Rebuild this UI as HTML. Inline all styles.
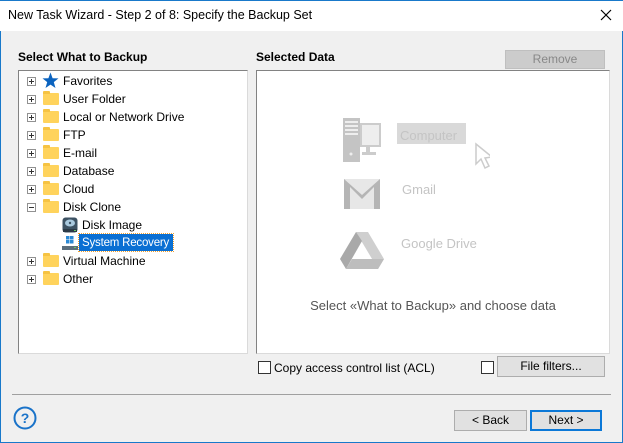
<!DOCTYPE html>
<html><head><style>
body{margin:0;width:623px;height:443px;overflow:hidden;font-family:"Liberation Sans",sans-serif;font-size:12px;color:#000}
.win{position:absolute;left:0;top:0;width:621px;height:442px;border:1px solid #1979ca;border-top:none;background:#f0f0f0}
.title{position:absolute;left:0;top:0;width:623px;height:31px;background:#fff;border-top:1px solid #1979ca;box-sizing:border-box}
.a{position:absolute;white-space:nowrap}
.t{margin-top:1px}
.box{position:absolute;background:#fff;border:1px solid #dadada;border-top-color:#828282;border-left-color:#828282}
.exp{position:absolute;width:7px;height:7px;border:1px solid #919191;background:#fff}
.exp:before{content:"";position:absolute;left:1px;top:3px;width:5px;height:1px;background:#333}
.exp.p:after{content:"";position:absolute;left:3px;top:1px;width:1px;height:5px;background:#333}
.fold{position:absolute;width:16px;height:12px;background:#ffd35c;border-radius:1px}
.fold:before{content:"";position:absolute;left:0;top:-2px;width:7px;height:3px;background:#f6c343;border-radius:1px 1px 0 0}
.btn{position:absolute;background:#e1e1e1;border:1px solid #adadad;text-align:center;box-sizing:border-box}
.cb{position:absolute;width:13px;height:13px;border:1px solid #333;background:#fff;box-sizing:border-box}
</style></head><body>
<div class="win"></div>
<div class="title">
<div class="a" style="left:8px;top:7px;font-size:12.5px">New Task Wizard - Step 2 of 8: Specify the Backup Set</div>
<svg class="a" style="left:600px;top:8px" width="12" height="12"><path d="M1 1L11 11M11 1L1 11" stroke="#000" stroke-width="1.2"/></svg>
</div>
<div class="a" style="left:18px;top:50px;font-weight:bold">Select What to Backup</div>
<div class="a" style="left:256px;top:50px;font-weight:bold">Selected Data</div>
<div class="btn" style="left:505px;top:50px;width:100px;height:19px;background:#ccc;border-color:#bfbfbf;color:#888;line-height:17px">Remove</div>

<div class="box" style="left:18px;top:70px;width:228px;height:282px"></div>
<div class="box" style="left:256px;top:70px;width:352px;height:282px"></div>

<svg class="a" style="left:42px;top:72px" width="17" height="17"><path d="M8.5 0.5L10.6 6.2L16.5 6.4L11.8 10.1L13.5 16L8.5 12.6L3.5 16L5.2 10.1L0.5 6.4L6.4 6.2Z" fill="#0b63bf"/></svg>
<div class="exp p" style="left:27px;top:77px"></div><div class="a t" style="left:63px;top:73px">Favorites</div>
<div class="exp p" style="left:27px;top:95px"></div><div class="fold" style="left:43px;top:93px"></div><div class="a t" style="left:63px;top:91px">User Folder</div>
<div class="exp p" style="left:27px;top:113px"></div><div class="fold" style="left:43px;top:111px"></div><div class="a t" style="left:63px;top:109px">Local or Network Drive</div>
<div class="exp p" style="left:27px;top:131px"></div><div class="fold" style="left:43px;top:129px"></div><div class="a t" style="left:63px;top:127px">FTP</div>
<div class="exp p" style="left:27px;top:149px"></div><div class="fold" style="left:43px;top:147px"></div><div class="a t" style="left:63px;top:145px">E-mail</div>
<div class="exp p" style="left:27px;top:167px"></div><div class="fold" style="left:43px;top:165px"></div><div class="a t" style="left:63px;top:163px">Database</div>
<div class="exp p" style="left:27px;top:185px"></div><div class="fold" style="left:43px;top:183px"></div><div class="a t" style="left:63px;top:181px">Cloud</div>
<div class="exp" style="left:27px;top:203px"></div><div class="fold" style="left:43px;top:201px"></div><div class="a t" style="left:63px;top:199px">Disk Clone</div>
<svg class="a" style="left:62px;top:217px" width="16" height="16"><rect x="0.5" y="0.5" width="15" height="15" rx="3" fill="#3d5263"/><ellipse cx="8" cy="6" rx="5" ry="3.5" fill="#a9c9de"/><circle cx="8" cy="6" r="1.2" fill="#3d5263"/><rect x="1" y="12" width="14" height="3" fill="#2b3a46"/><rect x="12" y="13" width="2" height="1" fill="#6c6"/></svg>
<div class="a t" style="left:82px;top:217px">Disk Image</div>
<svg class="a" style="left:62px;top:235px" width="16" height="16"><rect x="4" y="1" width="3.5" height="3.5" fill="#2b8ad6"/><rect x="8" y="1" width="3.5" height="3.5" fill="#2b8ad6"/><rect x="4" y="5" width="3.5" height="3.5" fill="#2b8ad6"/><rect x="8" y="5" width="3.5" height="3.5" fill="#2b8ad6"/><rect x="0" y="11" width="16" height="4" fill="#5b6e7c"/><rect x="12" y="12" width="2" height="1" fill="#6c6"/></svg>
<div class="a" style="left:79px;top:234px;width:94px;height:17px;background:#0a6fd3;outline:1px dotted #f0a030;color:#fff;line-height:18px;padding-left:3px;box-sizing:border-box;font-size:11.5px;letter-spacing:-0.2px;overflow:hidden">System Recovery</div>
<div class="exp p" style="left:27px;top:257px"></div><div class="fold" style="left:43px;top:255px"></div><div class="a t" style="left:63px;top:253px">Virtual Machine</div>
<div class="exp p" style="left:27px;top:275px"></div><div class="fold" style="left:43px;top:273px"></div><div class="a t" style="left:63px;top:271px">Other</div>

<svg class="a" style="left:340px;top:115px" width="150" height="160">
<rect x="3" y="3" width="17" height="44" fill="#c4c4c4"/><rect x="5" y="6" width="13" height="2" fill="#eee"/><rect x="5" y="10" width="13" height="2" fill="#eee"/><rect x="5" y="14" width="13" height="2" fill="#eee"/><rect x="5" y="18" width="13" height="2" fill="#eee"/><circle cx="11" cy="39" r="1.5" fill="#eee"/>
<rect x="21" y="9" width="19" height="22" fill="#eee" stroke="#ccc" stroke-width="2"/><rect x="26" y="32" width="4" height="5" fill="#ccc"/><rect x="22" y="37" width="14" height="3" fill="#ccc"/>
<rect x="57" y="8" width="69" height="21" fill="#d9d9d9"/>
<path d="M136 29L136 49L141 44L145 53L149 51L145 43L152 42Z" fill="#fff" stroke="#ccc" stroke-width="1.5"/>
<rect x="4" y="64" width="36" height="30" fill="#e7e7e7"/><path d="M4 64V94H10V72L22 84L34 72V94H40V64L22 80Z" fill="#b5b5b5"/>
<path d="M16 117L28 117L44 144L38 154Z" fill="#cfcfcf"/><path d="M16 117L0 144L6 154L22 126Z" fill="#a9a9a9"/><path d="M6 154L38 154L44 144L12 144Z" fill="#bdbdbd"/>
</svg>
<div class="a" style="left:400px;top:128px;color:#c4c4c4;font-size:13px">Computer</div>
<div class="a" style="left:402px;top:182px;color:#c4c4c4;font-size:13px">Gmail</div>
<div class="a" style="left:401px;top:236px;color:#c4c4c4;font-size:13px">Google Drive</div>
<div class="a" style="left:256px;top:298px;width:354px;text-align:center;color:#555;font-size:13px">Select «What to Backup» and choose data</div>

<div class="cb" style="left:258px;top:361px"></div><div class="a" style="left:274px;top:361px">Copy access control list (ACL)</div>
<div class="cb" style="left:481px;top:361px"></div>
<div class="btn" style="left:497px;top:356px;width:108px;height:21px;line-height:19px">File filters...</div>

<div class="a" style="left:12px;top:394px;width:599px;height:1px;background:#a0a0a0"></div>
<svg class="a" style="left:13px;top:406px" width="24" height="24"><circle cx="12" cy="12" r="10.5" fill="none" stroke="#1a73c9" stroke-width="2"/><text x="12" y="17" text-anchor="middle" font-family="Liberation Sans" font-weight="bold" font-size="14" fill="#1a73c9">?</text></svg>
<div class="btn" style="left:454px;top:410px;width:73px;height:21px;line-height:19px">&lt; Back</div>
<div class="btn" style="left:530px;top:410px;width:72px;height:21px;line-height:17px;border:2px solid #0b78d7">Next &gt;</div>
</body></html>
